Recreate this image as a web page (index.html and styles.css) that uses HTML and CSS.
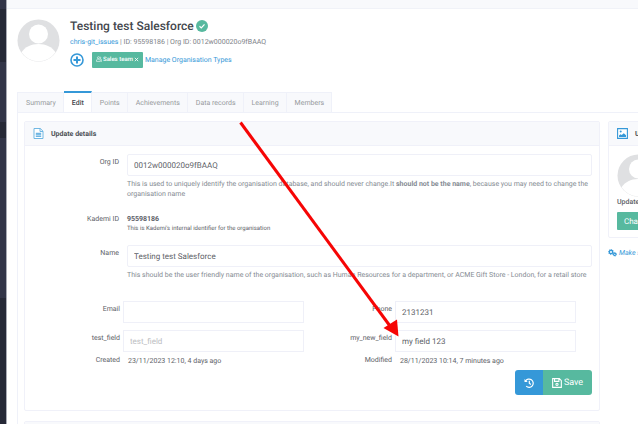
FILE: index.html
```html
<!DOCTYPE html>
<html lang="en">
<head>
    <title>Testing test Salesforce</title>
    <meta charset="UTF-8" />
    <link rel="stylesheet" href="styles.css">
</head>
<body>
    <div class="app">
        <nav class="sidebar">
            <div class="block first"></div>
            <div class="block dark tall"></div>
            <div class="block mid"></div>
            <div class="block dark short"></div>
            <div class="block long"></div>
            <div class="block dark rest"></div>
        </nav>
        <main class="main">
            <div class="topbar"></div>
            <header class="profile">
                <svg class="avatar" viewBox="0 0 43 43"><circle cx="21.5" cy="21.5" r="21" fill="#dfe0e2"/><circle cx="21.5" cy="15" r="9.5" fill="#fff"/><path d="M4.500 33.300C8 28 14 25 21.500 25s13.500 3 17 8.300A20.500 20.500 0 0 1 4.500 33.300z" fill="#fff"/></svg>
                <div class="profileInfo">
                    <h1>Testing test Salesforce <svg class="verified" viewBox="0 0 12 12"><circle cx="6" cy="6" r="6" fill="#57b99f"/><path d="M3.500 6.200l1.800 1.700 3.200-3.500" fill="none" stroke="#fff" stroke-width="1.200"/></svg></h1>
                    <div class="meta"><a href="#">chris-git_issues</a> | ID: 95598186 | Org ID: 0012w000020o9fBAAQ</div>
                    <div class="types">
                        <button class="add" type="button" aria-label="Add"><svg viewBox="0 0 14 14" fill="none" stroke="#3598d8"><circle cx="7" cy="7" r="6" stroke-width="1.600"/><path d="M7 3.500v7M3.500 7h7" stroke-width="2"/></svg></button>
                        <button class="tag" type="button"><svg viewBox="0 0 7 7" fill="none" stroke="#fff" stroke-width=".7"><circle cx="2.800" cy="2" r="1.200"/><path d="M.6 6.300V5.100C.6 4 1.500 3.700 2.800 3.700S5 4 5 5.100v1.200zM4.400.8c1.400 0 1.400 2.300.5 2.500 1.100.2 1.600.7 1.600 1.700v1.300H5.500"/></svg> Sales team <svg viewBox="0 0 6 6" class="cross" stroke="#fff" stroke-width="1"><path d="M1 1l4 4M5 1l-4 4"/></svg></button>
                        <a href="#">Manage Organisation Types</a>
                    </div>
                </div>
            </header>
            <nav class="tabs">
                <a href="#">Summary</a>
                <a href="#" class="active">Edit</a>
                <a href="#">Points</a>
                <a href="#">Achievements</a>
                <a href="#">Data records</a>
                <a href="#">Learning</a>
                <a href="#">Members</a>
            </nav>
            <div class="tabContent">
                <div class="left">
                    <form class="panel">
                        <div class="panelHead">
                            <svg viewBox="0 0 10 11"><path d="M.5.5h6.300l2.700 2.700v7.300h-9zM6.500.5v3h3" fill="#fff" stroke="#62b0e0" stroke-width=".9"/><path d="M2.300 5.300h5.400M2.300 6.800h5.400M2.300 8.300h5.400" stroke="#3598d8" stroke-width=".9"/></svg>
                            <h2>Update details</h2>
                        </div>
                        <div class="row">
                            <label for="orgId">Org ID</label>
                            <div>
                                <input id="orgId" type="text" value="0012w000020o9fBAAQ">
                                <p class="help">This is used to uniquely identify the organisation database, and should never change.It <b>should not be the name</b>, because you may need to change the organisation name</p>
                            </div>
                        </div>
                        <div class="row idRow">
                            <span class="label">Kademi ID</span>
                            <div>
                                <b class="value">95598186</b>
                                <p class="note">This is Kademi's internal identifier for the organisation</p>
                            </div>
                        </div>
                        <div class="row">
                            <label for="name">Name</label>
                            <div>
                                <input id="name" type="text" value="Testing test Salesforce">
                                <p class="help">This should be the user friendly name of the organisation, such as Human Resources for a department, or ACME Gift Store - London, for a retail store</p>
                            </div>
                        </div>
                        <div class="fields">
                            <label for="email">Email</label>
                            <input id="email" type="text">
                            <label for="phone">Phone</label>
                            <input id="phone" type="text" value="2131231">
                            <label for="testField">test_field</label>
                            <input id="testField" type="text" placeholder="test_field">
                            <label for="newField">my_new_field</label>
                            <input id="newField" type="text" value="my field 123">
                        </div>
                        <div class="fields dates">
                            <span class="label">Created</span>
                            <span class="date">23/11/2023 12:10, 4 days ago</span>
                            <span class="label">Modified</span>
                            <span class="date">28/11/2023 10:14, 7 minutes ago</span>
                        </div>
                        <div class="actions">
                            <button class="history" type="button" aria-label="History"><svg viewBox="0 0 10 10" fill="none" stroke="#fff" stroke-width="1.200"><path d="M1.500 3.200A4.100 4.100 0 1 1 2.200 8.100M5.300 2.800v2.500l1.600 1.200"/><path d="M.5.900v3.200h3.200z" fill="#fff" stroke="none"/></svg></button>
                            <button class="save" type="submit"><svg viewBox="0 0 9 9" fill="none" stroke="#fff"><path d="M.6.600h6l1.800 1.800v6H.6zM2.300.800v2.200h3.900V.8"/><circle cx="4.500" cy="5.700" r="1" /></svg> Save</button>
                        </div>
                    </form>
                    <div class="panel next"><div class="panelHead"></div></div>
                </div>
                <aside class="right">
                    <div class="panel">
                        <div class="panelHead">
                            <svg viewBox="0 0 11 11"><path d="M.6.600h9.800v9.800H.6z" fill="#fff" stroke="#3598d8" stroke-width="1.100"/><circle cx="3.700" cy="3.500" r="1" fill="#3598d8"/><path d="M2 9V7.500l1.500-1.200 1.200.8L6.800 5.200 9 7.300V9z" fill="#3598d8"/></svg>
                            <h2>Update photo</h2>
                        </div>
                        <div class="photo">
                            <svg class="avatar" viewBox="0 0 43 43"><circle cx="21.500" cy="21.500" r="21" fill="#dfe0e2"/><circle cx="21.500" cy="15" r="9.500" fill="#fff"/><path d="M4.500 33.300C8 28 14 25 21.500 25s13.500 3 17 8.300A20.500 20.500 0 0 1 4.500 33.300z" fill="#fff"/></svg>
                            <p>Update photo</p>
                            <button class="change" type="button">Change</button>
                        </div>
                    </div>
                    <a href="#" class="make"><svg viewBox="0 0 9 8" fill="none" stroke="#3598d8"><circle cx="3" cy="3" r="1.700" stroke-width="1.400"/><circle cx="3" cy="3" r="2.600" stroke-width=".7" stroke-dasharray="1 1"/><circle cx="6.800" cy="5.300" r="1.200" stroke-width="1.200"/><circle cx="6.800" cy="5.300" r="1.900" stroke-width=".6" stroke-dasharray=".8 .7"/></svg> Make sub organisation</a>
                </aside>
            </div>
        </main>
        <!-- arrow pointing at my_new_field -->
        <svg class="arrow" viewBox="0 0 160 216"><path d="M1.500 1.500L151 205" stroke="#f60505" stroke-width="3"/><path d="M159.500 215.500L144.500 207 158 198.500z" fill="#f60505"/></svg>
    </div>
</body>
</html>
```
FILE: styles.css
```css
*
{
    box-sizing: border-box;
}

body
{
    margin: 0;
    font-family: Roboto, sans-serif;
    font-size: 7px;
    line-height: 10px;
    color: #5d6167;
    background-color: #fff;
    text-rendering: geometricPrecision;
    overflow: hidden;
}

h1, h2, p
{
    margin: 0;
}

a
{
    color: #3598d8;
    text-decoration: none;
}

button, input
{
    font-family: inherit;
    color: inherit;
    text-rendering: inherit;
}

button
{
    border: 0;
    padding: 0;
    cursor: pointer;
}

.app
{
    position: relative;
    display: flex;
    height: 100vh;
    overflow: hidden;
}

.sidebar
{
    display: flex;
    flex-direction: column;
    flex: 0 0 7px;
    border-right: 1px solid #a9abb5;
}

.block
{
    background-color: #323548;
}

.dark { background-color: #262937; }
.first { height: 9px; }
.tall { height: 53px; }
.mid { height: 60px; }
.short { height: 16px; }
.long { height: 160px; }
.rest { flex: 1; }

.main
{
    flex: 1;
    min-width: 0;
}

.topbar
{
    height: 9px;
    background-color: #f8f9fc;
    border-bottom: 1px solid #f0f2f8;
}

/* organisation header */
.profile
{
    display: flex;
    gap: 10px;
    padding: 10px 10px 23px;
}

.avatar
{
    width: 43px;
    height: 43px;
    display: block;
}

.profile h1
{
    display: flex;
    align-items: center;
    gap: 2px;
    font-size: 12px;
    line-height: 14px;
    font-weight: 500;
    color: #43474d;
}

.verified
{
    width: 12px;
    height: 12px;
}

.meta
{
    margin-top: 4px;
    color: #7d8187;
}

.types
{
    display: flex;
    align-items: center;
    margin-top: 5px;
}

.add
{
    width: 14px;
    height: 14px;
    margin-right: 8px;
    background: none;
}

.add svg
{
    display: block;
}

.tag
{
    display: flex;
    align-items: center;
    gap: 1px;
    height: 16px;
    padding: 0 4px 2px;
    margin-right: 2px;
    border-radius: 1px;
    background-color: #57b99f;
    color: #fff;
    font-size: 6px;
    font-weight: 500;
}

.tag svg
{
    width: 6px;
    height: 6px;
}

.tag .cross
{
    width: 5px;
    height: 5px;
}

/* tabs */
.tabs
{
    display: flex;
    margin-top: 1px;
    margin-left: 10px;
}

.tabs a
{
    padding: 5px 7px 4px 8px;
    color: #97999d;
    background-color: #f8f9fc;
    border: 1px solid #eff1f9;
    border-width: 1px 1px 0 0;
}

.tabs a:first-child
{
    border-left-width: 1px;
}

.tabs a.active
{
    margin-top: -1px;
    color: #43474d;
    font-weight: 500;
    background-color: #fff;
    border-top: 2px solid #3598d8;
}

.tabContent
{
    display: flex;
    gap: 8px;
    margin-left: 10px;
    padding: 8px 0 0 6px;
    border: 1px solid #eff1f9;
    border-width: 1px 0 0 1px;
}

.left
{
    flex: 1;
    min-width: 0;
}

/* side column runs on past the edge of the window */
.right
{
    flex: 0 0 192px;
    margin-right: -162px;
}

.panel
{
    border: 1px solid #f0f1f9;
    border-radius: 2px;
}

.panelHead
{
    display: flex;
    align-items: center;
    gap: 7px;
    height: 24px;
    padding: 0 8px;
    background-color: #f8f9fc;
    border-bottom: 1px solid #f0f1f9;
}

.panelHead svg
{
    width: 11px;
    height: 11px;
}

.panelHead h2
{
    font-size: 7px;
    font-weight: 700;
    color: #4b4f55;
    white-space: nowrap;
}

.row
{
    display: grid;
    grid-template-columns: 102px 1fr;
    padding: 8px 7px 0 0;
}

label, .label
{
    padding-top: 3px;
    text-align: right;
}

.row label, .row .label
{
    padding-right: 8px;
}

input
{
    display: block;
    width: 100%;
    height: 22px;
    padding: 0 6px;
    border: 1px solid #eff0f8;
    border-radius: 2px;
    font-size: 8px;
    outline: none;
}

input::placeholder
{
    color: #bcbec2;
}

.help
{
    margin-top: 3px;
    color: #858b93;
}

.idRow
{
    padding-top: 12px;
    padding-bottom: 3px;
}

.value
{
    display: block;
    padding-top: 3px;
}

.note
{
    font-size: 6px;
}

.fields
{
    display: grid;
    grid-template-columns: 98px 1fr 91px 1fr;
    row-gap: 7px;
    padding: 21px 23px 0 0;
}

.fields label, .fields .label
{
    padding-right: 3px;
}

.fields input
{
    border-radius: 0;
}

.dates
{
    padding-top: 0;
}

.date
{
    padding: 4px 0 0 5px;
}

.actions
{
    display: flex;
    justify-content: flex-end;
    padding: 4px 7px 15px;
}

.actions button
{
    display: flex;
    align-items: center;
    justify-content: center;
    height: 25px;
    color: #fff;
    font-size: 9px;
}

.actions .history
{
    width: 28px;
    border-radius: 3px 0 0 3px;
    background-color: #3598d8;
}

.actions .save
{
    gap: 2px;
    width: 49px;
    border-radius: 0 3px 3px 0;
    background-color: #57b99f;
}

.actions svg
{
    width: 10px;
    height: 10px;
}

.next
{
    margin-top: 10px;
}

/* photo column */
.photo
{
    padding: 8px 8px 7px;
}

.photo p
{
    font-weight: 500;
}

.change
{
    height: 18px;
    margin-top: 5px;
    padding: 0 7px;
    border-radius: 1px;
    background-color: #57b99f;
    color: #fff;
    font-size: 8px;
}

.make
{
    display: flex;
    align-items: center;
    gap: 2px;
    margin-top: 10px;
    font-style: italic;
    white-space: nowrap;
}

.make svg
{
    width: 9px;
    height: 8px;
}

.arrow
{
    position: absolute;
    left: 239px;
    top: 121px;
    width: 160px;
    height: 216px;
    pointer-events: none;
}
```
